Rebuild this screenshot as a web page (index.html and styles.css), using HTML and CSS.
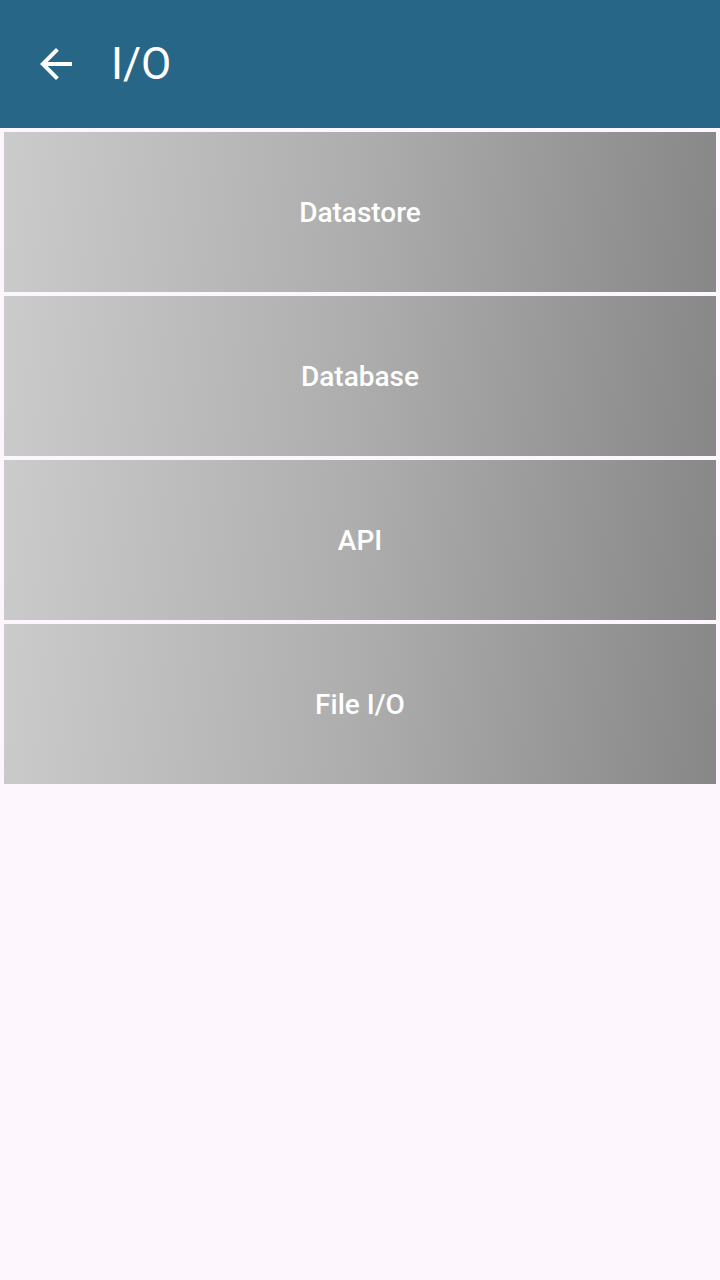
FILE: index.html
```html
<!DOCTYPE html>
<html>
<head>
<meta charset="utf-8">
<link rel="stylesheet" href="styles.css">
</head>
<body>
<header class="appbar">
  <button class="back" aria-label="Back">
    <svg viewBox="0 0 24 24" width="48" height="48"><path fill="#ffffff" d="M20 11H7.83l5.59-5.59L12 4l-8 8 8 8 1.41-1.41L7.83 13H20v-2z"/></svg>
  </button>
  <h1 class="title">I/O</h1>
</header>
<main class="list">
  <div class="card">Datastore</div>
  <div class="card">Database</div>
  <div class="card">API</div>
  <div class="card">File I/O</div>
</main>
</body>
</html>
```
FILE: styles.css
```css
html, body {
  margin: 0;
  padding: 0;
}
body {
  background: #fdf7fd;
  font-family: Roboto, "Noto Sans", sans-serif;
  width: 720px;
  height: 1280px;
}
.appbar {
  height: 128px;
  background: #286688;
  display: flex;
  align-items: center;
  padding-left: 32px;
  box-sizing: border-box;
}
.back {
  width: 48px;
  height: 48px;
  padding: 0;
  border: 0;
  background: none;
  display: flex;
}
.title {
  margin: 0 0 0 31px;
  color: #ffffff;
  font-size: 44px;
  font-weight: 400;
  line-height: 1;
}
.list {
  display: flex;
  flex-direction: column;
  gap: 4px;
  padding: 4px;
}
.card {
  height: 160px;
  display: flex;
  align-items: center;
  justify-content: center;
  color: #ffffff;
  font-size: 28px;
  font-weight: 500;
  background: linear-gradient(95deg, #cbcbcb 0%, #adadad 50%, #878787 100%);
}
```
